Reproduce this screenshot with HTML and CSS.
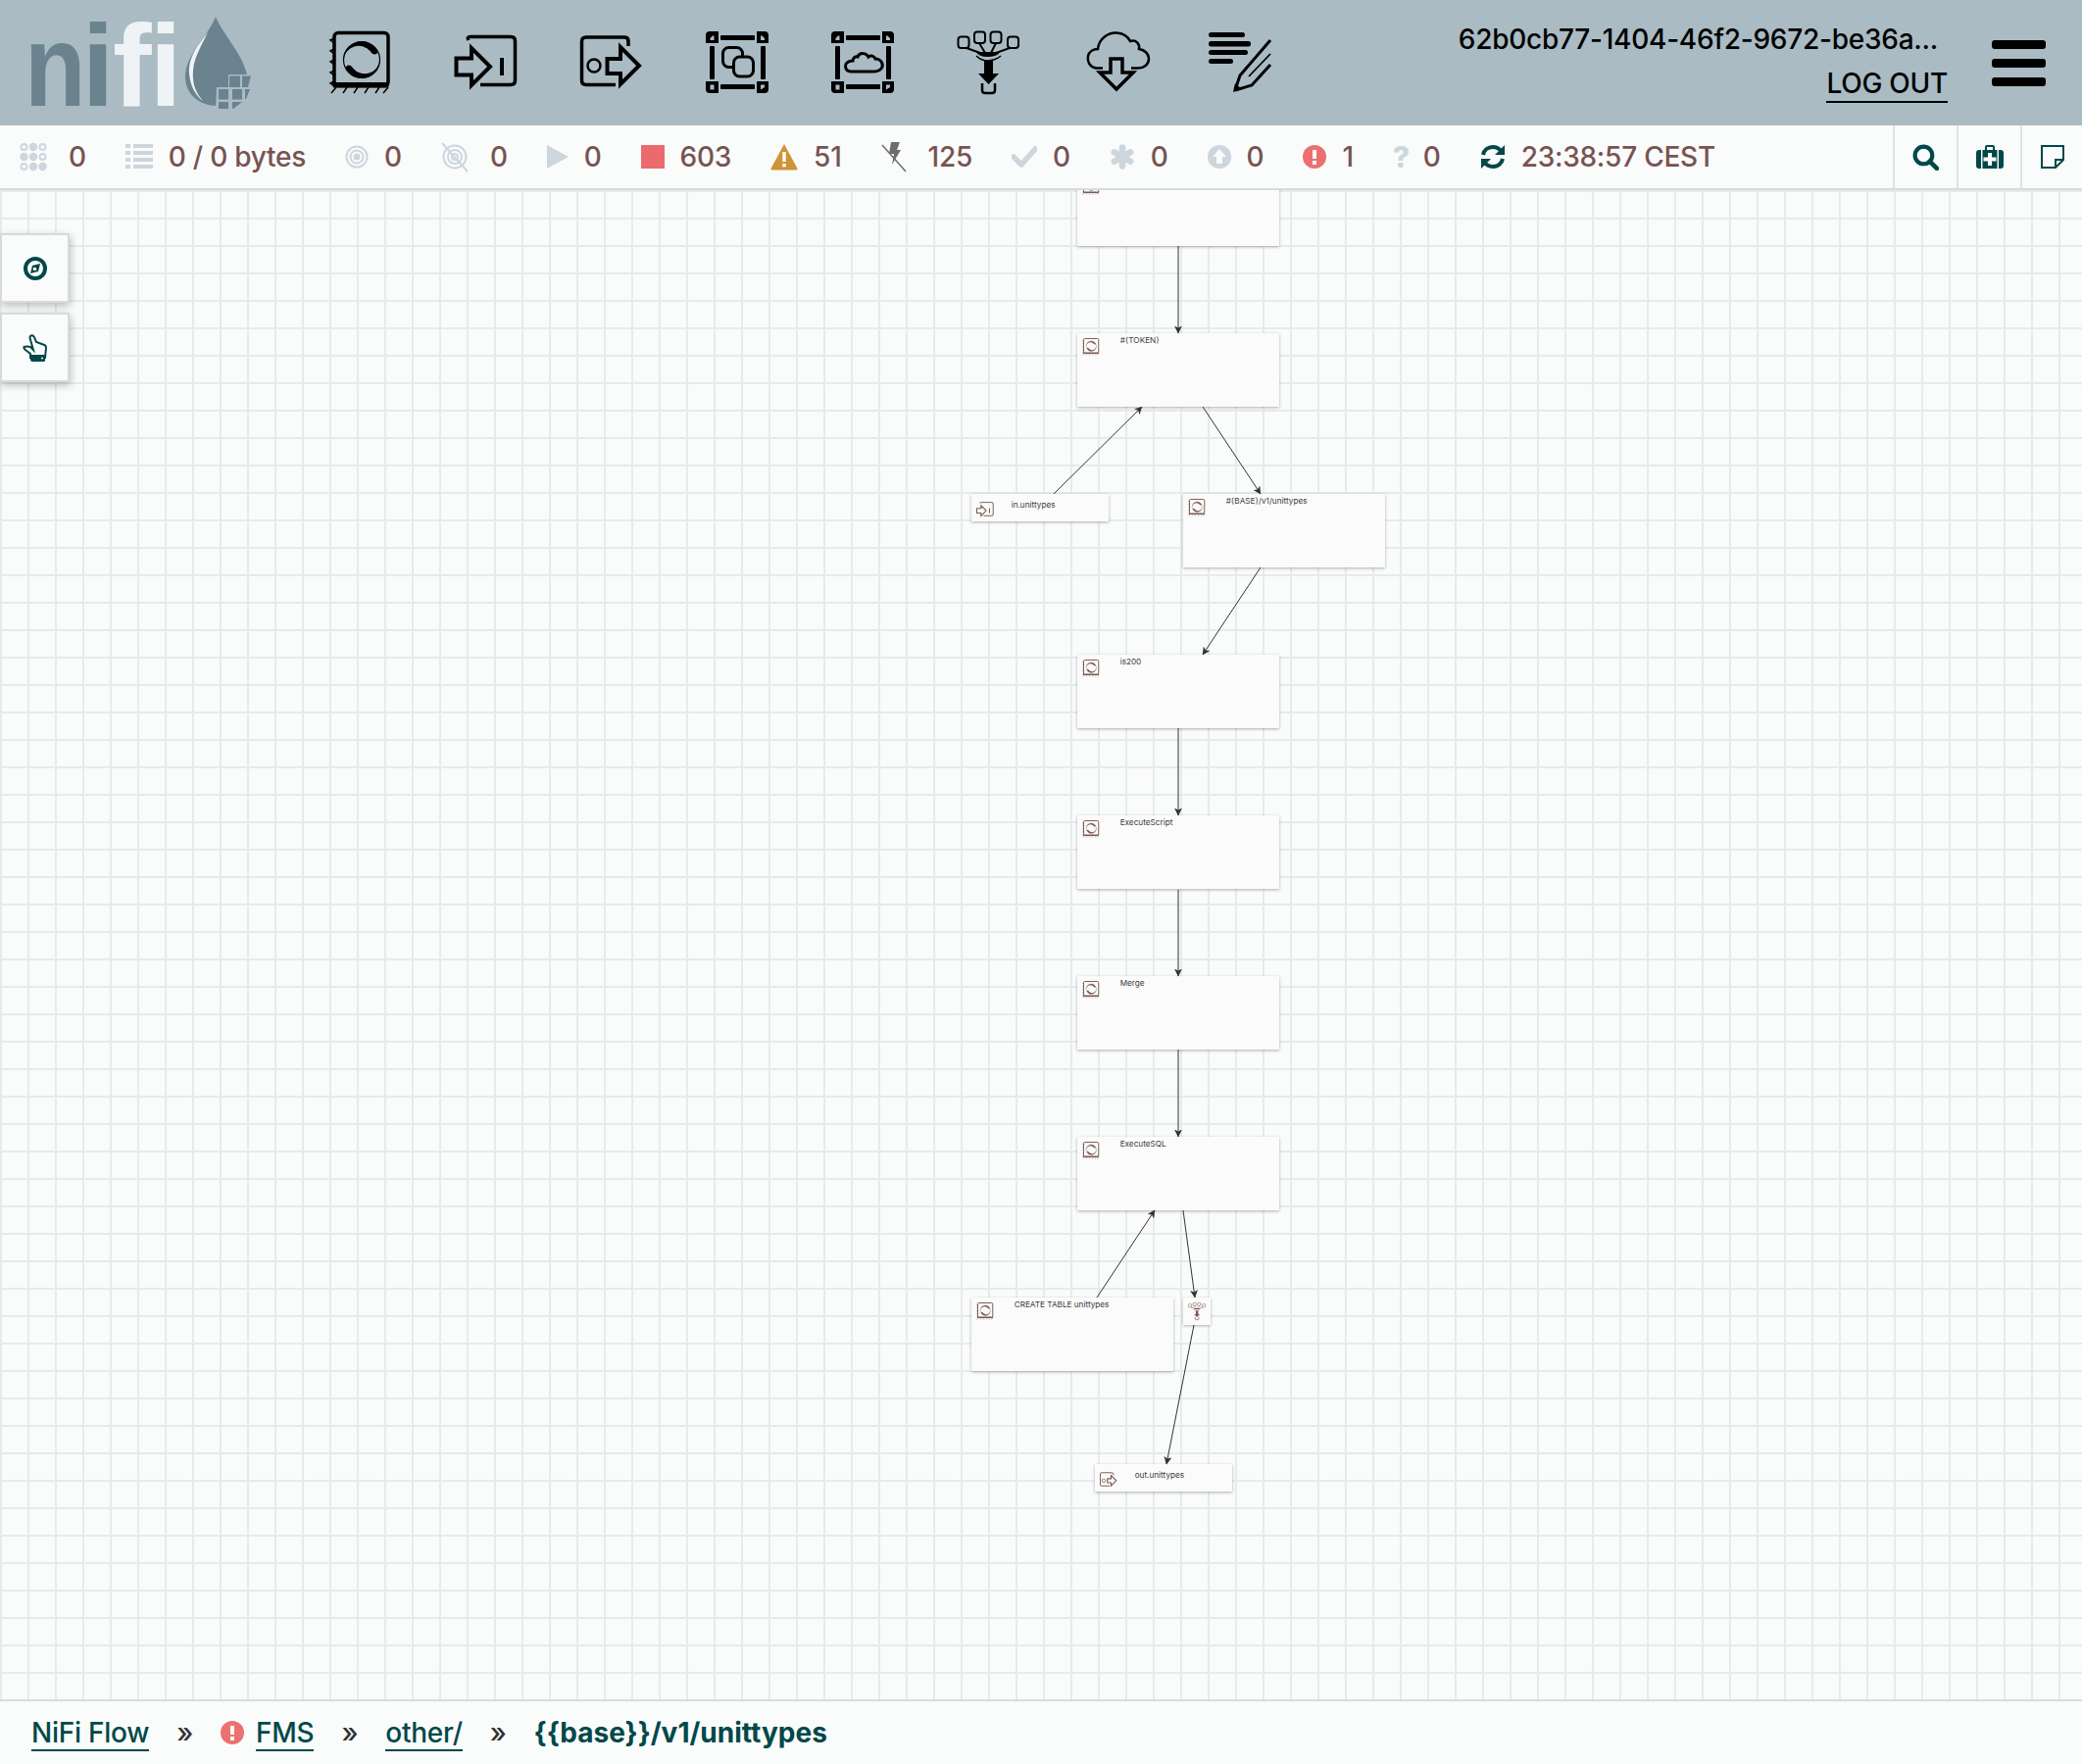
FILE: index.html
```html
<!DOCTYPE html>
<html lang="en">
<head>
<meta charset="utf-8">
<title>NiFi Flow</title>
<link rel="stylesheet" href="styles.css">
</head>
<body>
<svg class="defs" aria-hidden="true">
  <symbol id="proc" viewBox="332 28 72 72" overflow="visible">
    <rect x="341" y="33.500" width="55" height="54" rx="4" fill="none" stroke="currentColor" stroke-width="3.500"/>
    <path d="M339 84 H396 Q398 88 395 89.500 H340Z" fill="currentColor"/>
    <path d="M341 39 L337 41 L341 44 M341 50 L337 52 L341 55 M341 61 L337 63 L341 66 M341 72 L337 74 L341 77 M341 83 L337 85 L341 88 M343 89 L338 95 M354 89 L350 95 M365 89 L361 95 M376 89 L372 95 M387 89 L383 95 M396 89 L391 95" fill="none" stroke="currentColor" stroke-width="1.500"/>
    <circle cx="369" cy="61" r="18.500" fill="none" stroke="currentColor" stroke-width="1.200"/>
    <path d="M350.500 61 A18.500 18.500 0 0 1 385 51.500 Q386 55 382.500 55.500 Q379.500 55.500 378 52.500 A15.500 15.500 0 0 0 350.500 61Z" fill="currentColor"/>
    <path d="M350.500 61 A18.500 18.500 0 0 1 385 51.500 Q386 55 382.500 55.500 Q379.500 55.500 378 52.500 A15.500 15.500 0 0 0 350.500 61Z" fill="currentColor" transform="rotate(180 369 61)"/>
  </symbol>
  <symbol id="inport" viewBox="460 28 72 72" overflow="visible">
    <path d="M478 41 Q476 37.500 480 37.500 H521 Q525.500 37.500 525.500 42 V82 Q525.500 86.500 521 86.500 H490" fill="none" stroke="currentColor" stroke-width="3.500"/>
    <path d="M465.500 59.500 H481 V49 L500 68 L481 87 V76.500 H465.500Z" fill="none" stroke="currentColor" stroke-width="4"/>
    <rect x="510" y="59" width="4" height="18" fill="currentColor"/>
  </symbol>
  <symbol id="outport" viewBox="588 28 72 72" overflow="visible">
    <path d="M641 47 V42 Q641 38 637 38 H598 Q593.500 38 593.500 42.500 V82 Q593.500 86.500 598 86.500 H628" fill="none" stroke="currentColor" stroke-width="3.500"/>
    <circle cx="606" cy="67" r="6.500" fill="none" stroke="currentColor" stroke-width="2.500"/>
    <path d="M619.500 60 H633 V48 L652 67 L633 86 V75 H619.500Z" fill="none" stroke="currentColor" stroke-width="4"/>
  </symbol>
  <symbol id="pg" viewBox="715 28 72 72" overflow="visible">
    <path d="M723 32 H732 V44 H719 V36 Q719 32 723 32Z M726 36.500 L723.500 39 V41 H727.500 V36.500Z" fill="currentColor" fill-rule="evenodd"/>
    <path d="M771 32 H779 Q783 32 783 36 V44 H771Z M775 36.500 V41 H779 V39 L776.500 36.500Z" fill="currentColor" fill-rule="evenodd"/>
    <path d="M719 83 H732 V95 H723 Q719 95 719 91Z M723.500 86.500 V91.500 H727.500 V86.500Z" fill="currentColor" fill-rule="evenodd"/>
    <path d="M771 83 H783 V91 Q783 95 779 95 H771Z M775 86.500 V91.500 L779 89 V86.500Z" fill="currentColor" fill-rule="evenodd"/>
    <rect x="734" y="36" width="35" height="5" rx="1" fill="currentColor"/>
    <rect x="734" y="86" width="35" height="5" rx="1" fill="currentColor"/>
    <rect x="723" y="47" width="5" height="34" rx="1" fill="currentColor"/>
    <rect x="775" y="47" width="5" height="34" rx="1" fill="currentColor"/>
    <rect x="736.500" y="48.500" width="20" height="20" rx="6" fill="none" stroke="currentColor" stroke-width="3"/>
    <rect x="747.500" y="58" width="20" height="20" rx="6" fill="#aabbc3" stroke="currentColor" stroke-width="3"/>
  </symbol>
  <symbol id="rpg" viewBox="843 28 72 72" overflow="visible">
    <path d="M851 32 H860 V44 H847 V36 Q847 32 851 32Z M854 36.500 L851.500 39 V41 H855.500 V36.500Z" fill="currentColor" fill-rule="evenodd"/>
    <path d="M899 32 H907 Q911 32 911 36 V44 H899Z M903 36.500 V41 H907 V39 L904.500 36.500Z" fill="currentColor" fill-rule="evenodd"/>
    <path d="M847 83 H860 V95 H851 Q847 95 847 91Z M851.500 86.500 V91.500 H855.500 V86.500Z" fill="currentColor" fill-rule="evenodd"/>
    <path d="M899 83 H911 V91 Q911 95 907 95 H899Z M903 86.500 V91.500 L907 89 V86.500Z" fill="currentColor" fill-rule="evenodd"/>
    <rect x="862" y="36" width="35" height="5" rx="1" fill="currentColor"/>
    <rect x="862" y="86" width="35" height="5" rx="1" fill="currentColor"/>
    <rect x="851" y="47" width="5" height="34" rx="1" fill="currentColor"/>
    <rect x="903" y="47" width="5" height="34" rx="1" fill="currentColor"/>
    <path d="M867 73 H890 C898 73 900 68 899 65 C898 61 894 60 892 60 C891 57 887 56 885 58 C883 54 876 53 874 58 C872 57 869 59 869 62 C864 62 861 65 861.500 68 C862 71 864 73 867 73Z" fill="none" stroke="currentColor" stroke-width="3"/>
  </symbol>
  <symbol id="funnel" viewBox="971 28 72 72" overflow="visible">
    <rect x="976.500" y="37.500" width="11" height="11.500" rx="3" fill="none" stroke="currentColor" stroke-width="2"/>
    <rect x="993" y="32.500" width="11" height="11.500" rx="3" fill="none" stroke="currentColor" stroke-width="2"/>
    <rect x="1009.500" y="32.500" width="11" height="11.500" rx="3" fill="none" stroke="currentColor" stroke-width="2"/>
    <rect x="1027" y="37.500" width="11" height="11.500" rx="3" fill="none" stroke="currentColor" stroke-width="2"/>
    <path d="M985 49 L999 54 M998 44 L1004 54 M1015 44 L1010 54 M1029 49 L1015 54" fill="none" stroke="currentColor" stroke-width="2"/>
    <path d="M995 53 H1019 Q1017 58 1007 58 Q997 58 995 53Z" fill="currentColor"/>
    <path d="M995 57 Q1000 62 1007 62 Q1014 62 1020 57" fill="none" stroke="currentColor" stroke-width="1.500"/>
    <path d="M1003 62 H1012 V75 H1018 L1007.500 86 L997 75 H1003Z" fill="currentColor"/>
    <path d="M1001 85 V92 Q1001 95 1004 95 H1011 Q1014 95 1014 92 V85" fill="none" stroke="currentColor" stroke-width="2.500"/>
  </symbol>
  <symbol id="tcloud" viewBox="1099 28 72 72" overflow="visible">
    <path d="M1124 69.500 H1117 C1110 68 1108 62 1109 57 C1110 53 1114 50 1119 50 C1120 39 1130 33 1138 33.500 C1145 34 1150 38 1152 42 C1158 40 1162 45 1161 50 C1167 51 1171 55 1171 60 C1171 66 1166 69.500 1160 69.500 H1153" fill="none" stroke="currentColor" stroke-width="2.500"/>
    <path d="M1132 60 H1144 V74 H1155 L1138 91 L1121 74 H1132Z" fill="none" stroke="currentColor" stroke-width="3.500"/>
  </symbol>
  <symbol id="label" viewBox="1227 28 72 72" overflow="visible">
    <rect x="1232" y="33" width="37" height="5" rx="2.500" fill="currentColor"/>
    <rect x="1232" y="42" width="43" height="5.500" rx="2.500" fill="currentColor"/>
    <rect x="1232" y="51" width="40" height="5" rx="2.500" fill="currentColor"/>
    <rect x="1232" y="60" width="25" height="5" rx="2.500" fill="currentColor"/>
    <path d="M1259 92 L1264 77 L1295 41 M1259 92 L1276 87 L1295 66" fill="none" stroke="currentColor" stroke-width="3"/>
    <path d="M1273 78 L1295 55" fill="none" stroke="currentColor" stroke-width="1.800"/>
    <path d="M1257 94 L1259 85 L1266 91Z" fill="currentColor"/>
  </symbol>
</svg>

<header class="top">
  <svg class="logo" viewBox="0 0 264 136" role="img" aria-label="NiFi">
    <text class="logo-d" x="0" y="108" transform="translate(25 0) scale(.86 1)">n</text>
    <text class="logo-d" x="83.500" y="108">i</text>
    <text class="logo-l" x="115" y="108">f</text>
    <text class="logo-l" x="152.500" y="108">i</text>
    <path class="drop" d="M220 17 C226 34 253 60 253 85 C253 98 241 108 222 108 C203 108 189 96 189 78 C189 56 213 36 220 17Z"/>
    <path class="shine" d="M212 33 C202 46 192 58 193 75 C194 88 200 98 207 103 C199 94 196 84 197 72 C198 58 206 46 212 33Z"/>
    <path class="gap" d="M220 112 H256 V76 H233 V89 H221Z"/>
    <path class="drop" d="M234 77.500 H245 V89 H234Z M247 77.500 H256 L253 89 H247Z M223 91 H233 V101.500 H223Z M237 91 H247 V101.500 H237Z M250 91 H255 L251 101 H250Z M223 104 H233 V111 H223Z M237 104 H247 L238 111 H237Z"/>
  </svg>
  <nav class="tools">
    <button class="tool"><svg><use href="#proc"/></svg></button>
    <button class="tool"><svg><use href="#inport"/></svg></button>
    <button class="tool"><svg><use href="#outport"/></svg></button>
    <button class="tool"><svg><use href="#pg"/></svg></button>
    <button class="tool"><svg><use href="#rpg"/></svg></button>
    <button class="tool"><svg><use href="#funnel"/></svg></button>
    <button class="tool"><svg><use href="#tcloud"/></svg></button>
    <button class="tool"><svg><use href="#label"/></svg></button>
  </nav>
  <div class="user">
    <div class="user-name">62b0cb77-1404-46f2-9672-be36a...</div>
    <a class="logout">LOG OUT</a>
  </div>
  <div class="burger"><span></span><span></span><span></span></div>
</header>

<section class="status">
  <div class="stats">
    <div class="stat wide"><svg class="ic w28" viewBox="0 0 28 30"><g fill="#ccd6dc"><circle cx="4.500" cy="5" r="3" fill="none" stroke="#ccd6dc" stroke-width="2"/><circle cx="14" cy="5" r="4.200"/><circle cx="23.500" cy="5" r="3" fill="none" stroke="#ccd6dc" stroke-width="2"/><circle cx="4.500" cy="15" r="4.200"/><circle cx="14" cy="15" r="4.200"/><circle cx="23.500" cy="15" r="3" fill="none" stroke="#ccd6dc" stroke-width="2"/><circle cx="4.500" cy="25" r="3" fill="none" stroke="#ccd6dc" stroke-width="2"/><circle cx="14" cy="25" r="4.200"/><circle cx="23.500" cy="25" r="4.200"/></g></svg><span>0</span></div>
    <div class="stat"><svg class="ic w28" viewBox="0 0 28 30"><g fill="#ccd6dc"><rect x="0" y="2" width="5" height="4"/><rect x="8" y="2" width="20" height="4"/><rect x="0" y="9" width="5" height="4"/><rect x="8" y="9" width="20" height="4"/><rect x="0" y="16" width="5" height="4"/><rect x="8" y="16" width="20" height="4"/><rect x="0" y="23" width="5" height="4"/><rect x="8" y="23" width="20" height="4"/></g></svg><span>0 / 0 bytes</span></div>
    <div class="stat"><svg class="ic w24" viewBox="0 0 24 30"><g fill="none" stroke="#ccd6dc"><circle cx="12" cy="15" r="10.500" stroke-width="2"/><circle cx="12" cy="15" r="6.500" stroke-width="2"/></g><circle cx="12" cy="15" r="3.500" fill="#ccd6dc"/></svg><span>0</span></div>
    <div class="stat wide"><svg class="ic w28" viewBox="0 0 28 32"><g fill="none" stroke="#ccd6dc"><circle cx="14" cy="16" r="11.500" stroke-width="2"/><circle cx="14" cy="16" r="7" stroke-width="2"/><circle cx="14" cy="16" r="3" stroke-width="2"/><path d="M1 2 L27 31" stroke-width="2"/></g></svg><span>0</span></div>
    <div class="stat"><svg class="ic w22" viewBox="0 0 22 30"><path d="M0 3 L22 15 L0 27Z" fill="#ccd6dc"/></svg><span>0</span></div>
    <div class="stat"><span class="square"></span><span>603</span></div>
    <div class="stat"><svg class="ic w28" viewBox="0 0 28 28"><path d="M14 1 L27.500 26 Q28 27.500 26 27.500 H2 Q0 27.500 .5 26Z" fill="#cf9338"/><rect x="12.300" y="9" width="3.400" height="10" fill="#fff"/><rect x="12.300" y="21" width="3.400" height="3.400" fill="#fff"/></svg><span>51</span></div>
    <div class="stat wide"><svg class="ic w26" viewBox="0 0 26 32"><path d="M10 1 H19 L16 9 H20 L11 24 L13 13 H8Z" fill="#6d6d6d"/><path d="M1 4 L25 31" stroke="#6d6d6d" stroke-width="1.500"/></svg><span>125</span></div>
    <div class="stat"><svg class="ic w26" viewBox="0 0 26 22"><path d="M2 11 L10 19 L24 3" fill="none" stroke="#ccd6dc" stroke-width="5.500" stroke-linejoin="round" stroke-linecap="round"/></svg><span>0</span></div>
    <div class="stat"><svg class="ic w26" viewBox="0 0 26 26"><g stroke="#ccd6dc" stroke-width="6.500" stroke-linecap="round"><path d="M13 3.500 V22.500"/><path d="M4.800 8.300 L21.200 17.700"/><path d="M21.200 8.300 L4.800 17.700"/></g></svg><span>0</span></div>
    <div class="stat"><svg class="ic w24" viewBox="0 0 24 24"><circle cx="12" cy="12" r="12" fill="#ccd6dc"/><path d="M12 4 L19 12 H15 V19 H9 V12 H5Z" fill="#f9fafb"/></svg><span>0</span></div>
    <div class="stat"><svg class="ic w24" viewBox="0 0 24 24"><circle cx="12" cy="12" r="12" fill="#ec7070"/><rect x="10" y="5" width="4" height="9" fill="#fff"/><rect x="10" y="16" width="4" height="4" fill="#fff"/></svg><span>1</span></div>
    <div class="stat"><span class="q">?</span><span>0</span></div>
    <div class="stat"><svg class="ic w26" viewBox="0 0 26 26"><g fill="none" stroke="#004849" stroke-width="4"><path d="M3 11 C4 6 8 3 13 3 C17 3 20 5 22 8"/><path d="M23 15 C22 20 18 23 13 23 C9 23 6 21 4 18"/></g><path d="M25 1 V11 H15Z M1 25 V15 H11Z" fill="#004849"/></svg><span>23:38:57 CEST</span></div>
  </div>
  <div class="actions">
    <button class="act"><svg class="ic w27" viewBox="0 0 26 26"><circle cx="11" cy="11" r="8.500" fill="none" stroke="#004849" stroke-width="4"/><path d="M17 17 L24 24" stroke="#004849" stroke-width="4.500" stroke-linecap="round"/></svg></button>
    <button class="act"><svg class="ic w28" viewBox="0 0 28 24"><path d="M3 5 H25 Q28 5 28 8 V21 Q28 24 25 24 H3 Q0 24 0 21 V8 Q0 5 3 5Z M9 5 V2 Q9 0 11 0 H17 Q19 0 19 2 V5 H17 V2 H11 V5Z" fill="#004849"/><path d="M5 5 H6.500 V24 H5Z M21.500 5 H23 V24 H21.500Z" fill="#f9fafb"/><path d="M12 8 H16 V12.500 H20.500 V16.500 H16 V21 H12 V16.500 H7.500 V12.500 H12Z" fill="#f9fafb"/></svg></button>
    <button class="act"><svg class="ic w24" viewBox="0 0 24 24"><path d="M1 1 H23 V15 L15 23 H1Z M23 15 H15 V23" fill="none" stroke="#004849" stroke-width="2"/></svg></button>
  </div>
</section>

<main class="canvas">
  <div class="node proc n1"><svg class="nic"><use href="#proc"/></svg></div>
  <div class="node proc n2"><svg class="nic"><use href="#proc"/></svg><span class="name">#{TOKEN}</span></div>
  <div class="node port n3"><svg class="nic"><use href="#inport"/></svg><span class="name">in.unittypes</span></div>
  <div class="node proc n4"><svg class="nic"><use href="#proc"/></svg><span class="name">#{BASE}/v1/unittypes</span></div>
  <div class="node proc n5"><svg class="nic"><use href="#proc"/></svg><span class="name">is200</span></div>
  <div class="node proc n6"><svg class="nic"><use href="#proc"/></svg><span class="name">ExecuteScript</span></div>
  <div class="node proc n7"><svg class="nic"><use href="#proc"/></svg><span class="name">Merge</span></div>
  <div class="node proc n8"><svg class="nic"><use href="#proc"/></svg><span class="name">ExecuteSQL</span></div>
  <div class="node proc n9"><svg class="nic"><use href="#proc"/></svg><span class="name">CREATE TABLE unittypes</span></div>
  <div class="node fun n10"><svg class="nic"><use href="#funnel"/></svg></div>
  <div class="node port n11"><svg class="nic"><use href="#outport"/></svg><span class="name">out.unittypes</span></div>

  <svg class="links" viewBox="0 194 2124 1540">
    <defs><marker id="arrow" viewBox="0 0 8 8" refX="7.500" refY="4" markerWidth="8" markerHeight="8" orient="auto" markerUnits="userSpaceOnUse"><path d="M0 0 L8 4 L0 8 L2 4Z" fill="#333"/></marker></defs>
    <g class="link">
      <path d="M1202 251 L1202 340"/>
      <path d="M1075 504 L1165 415"/>
      <path d="M1227 415 L1286 504"/>
      <path d="M1286 579 L1227 668"/>
      <path d="M1202 743 L1202 832"/>
      <path d="M1202 908 L1202 996"/>
      <path d="M1202 1071 L1202 1160"/>
      <path d="M1119 1324 L1178 1235"/>
      <path d="M1207 1235 L1219 1324"/>
      <path d="M1218 1352 L1190 1494"/>
    </g>
  </svg>

  <div class="side">
    <button class="side-btn"><svg class="ic w24" viewBox="0 0 24 24"><circle cx="12" cy="12" r="10" fill="none" stroke="#004849" stroke-width="4"/><path d="M17 7 L15 15 L7 17 L9 9Z" fill="#004849"/><circle cx="11.500" cy="12.500" r="1.800" fill="#f9fafb"/></svg></button>
    <button class="side-btn"><svg class="ic w26" viewBox="0 0 26 28"><path d="M11 16 L8 13 Q4 12 1.500 13 Q1 15 3 16 L8 20 V24 H23 L24 14 Q24 11 21 10.500 L14 8 L12 3 Q10 0 8 2 Q7 3.500 8 5.500Z" fill="none" stroke="#004849" stroke-width="2"/><path d="M8 21 H23 V27 Q23 28 22 28 H10 Q8 28 8 26Z" fill="#004849"/><circle cx="20" cy="24.500" r="1" fill="#f9fafb"/></svg></button>
  </div>
</main>

<footer class="crumbs">
  <a class="crumb">NiFi Flow</a>
  <span class="sep">»</span>
  <svg class="ic w24 err" viewBox="0 0 24 24"><circle cx="12" cy="12" r="12" fill="#ec7070"/><rect x="10" y="5" width="4" height="9" fill="#fff"/><rect x="10" y="16" width="4" height="4" fill="#fff"/></svg>
  <a class="crumb">FMS</a>
  <span class="sep">»</span>
  <a class="crumb">other/</a>
  <span class="sep">»</span>
  <strong class="current">{{base}}/v1/unittypes</strong>
</footer>
</body>
</html>
```

FILE: styles.css
```css
* { box-sizing: border-box; }
html, body { margin: 0; height: 100%; }
body {
  display: flex;
  flex-direction: column;
  height: 1800px;
  overflow: hidden;
  background: #fafbfb;
  font-family: Inter, "Liberation Sans", sans-serif;
  font-size: 28px;
  font-weight: 450;
  letter-spacing: -.25px;
  color: #775351;
}
button { appearance: none; border: 0; padding: 0; margin: 0; background: none; display: flex; align-items: center; justify-content: center; }
.defs { position: absolute; width: 0; height: 0; }

/* header */
.top {
  flex: 0 0 128px;
  display: flex;
  align-items: flex-start;
  background: #aabbc3;
  color: #000;
}
.logo { flex: 0 0 264px; width: 264px; height: 136px; margin-bottom: -8px; }
.logo text { font-family: "Liberation Sans", sans-serif; font-weight: 700; font-size: 119px; letter-spacing: 0; }
.logo-d { fill: #6a838f; }
.logo-l { fill: #eff3f5; }
.drop { fill: #6a838f; }
.shine { fill: #eff3f5; }
.gap { fill: #aabbc3; }
.tools { display: flex; margin-left: 40px; }
.tool { width: 128px; height: 128px; color: #000; }
.tool svg { width: 72px; height: 72px; overflow: visible; }
.user {
  margin-left: auto;
  margin-right: 44px;
  display: flex;
  flex-direction: column;
  align-items: flex-end;
  height: 128px;
  padding-top: 21px;
}
.user-name { line-height: 38px; margin-right: 10px; }
.logout { line-height: 36px; margin-top: 8px; border-bottom: 2px solid #000; }
.burger { display: flex; flex-direction: column; gap: 10px; width: 55px; margin: 41px 37px 0 1px; }
.burger span { height: 9px; border-radius: 3px; background: #000; }

/* status */
.status {
  flex: 0 0 66px;
  display: flex;
  justify-content: space-between;
  border-bottom: 2px solid #d9dcde;
  background: #fafbfb;
}
.stats { display: flex; align-items: center; gap: 40px; padding-left: 20px; }
.stat { display: flex; align-items: center; gap: 16px; white-space: nowrap; }
.stat.wide { gap: 22px; }
.ic { display: block; flex: none; height: auto; }
.w22 { width: 22px; }
.w24 { width: 24px; }
.w26 { width: 26px; }
.w27 { width: 27px; }
.w28 { width: 28px; }
.square { width: 24px; height: 24px; background: #ec6a6e; }
.q { width: 15px; color: #ccd6dc; font-weight: 800; font-size: 30px; text-align: center; }
.actions { display: flex; }
.act { width: 65px; height: 64px; border-left: 2px solid #dfe2e4; }
.act:last-child { width: 63px; }

/* canvas */
.canvas {
  position: relative;
  flex: 1 1 auto;
  overflow: hidden;
  background-color: #fafbfb;
  background-image:
    linear-gradient(to right, #e6ebee 2px, transparent 2px),
    linear-gradient(to bottom, #e6ebee 2px, transparent 2px);
  background-size: 28px 28px;
}
.links { position: absolute; left: 0; top: 0; width: 2124px; height: 1540px; pointer-events: none; }
.link path { fill: none; stroke: #333; stroke-width: 1; marker-end: url(#arrow); }
.node {
  position: absolute;
  background: #fbfbfb;
  box-shadow: 0 1px 3px rgba(0, 0, 0, .3);
  color: #7b5a50;
}
.proc { width: 206.67px; height: 75.33px; }
.port { width: 140.67px; height: 28.33px; }
.fun { width: 28.67px; height: 28.33px; }
.nic { position: absolute; left: 4px; top: 4px; width: 20px; height: 20px; overflow: visible; }
.port .nic { top: 6px; left: 4px; }
.name {
  position: absolute;
  left: 44px;
  top: 2.5px;
  font-size: 8.2px;
  font-weight: 400;
  letter-spacing: 0;
  line-height: 10px;
  color: #3c3c3c;
  white-space: nowrap;
}
.port .name { left: 41px; top: 6.5px; }
.n1 { left: 1098.67px; top: -18.33px; }
.n2 { left: 1098.67px; top: 145.67px; }
.n3 { left: 990.67px; top: 309.67px; }
.n4 { left: 1206.67px; top: 309.67px; }
.n5 { left: 1098.67px; top: 473.67px; }
.n6 { left: 1098.67px; top: 637.67px; }
.n7 { left: 1098.67px; top: 801.67px; }
.n8 { left: 1098.67px; top: 965.67px; }
.n9 { left: 990.67px; top: 1129.67px; }
.n10 { left: 1206.67px; top: 1129.67px; }
.n11 { left: 1116.67px; top: 1299.67px; }

/* side buttons */
.side {
  position: absolute;
  left: 0;
  top: 44px;
  display: flex;
  flex-direction: column;
  gap: 10px;
}
.side-btn {
  width: 71px;
  height: 71px;
  background: #fafbfb;
  border: 2px solid #d9d9d9;
  box-shadow: 1px 3px 8px rgba(0, 0, 0, .25);
}

/* footer */
.crumbs {
  flex: 0 0 66px;
  display: flex;
  align-items: center;
  border-top: 2px solid #d9dcde;
  padding-left: 32px;
  background: #fafbfb;
  color: #004849;
}
.crumb { line-height: 34px; border-bottom: 2px solid #004849; margin-top: 2px; }
.sep { color: #333; margin: 0 28px; }
.err { margin-right: 12px; }
.current { font-weight: 700; letter-spacing: 0; }
```
